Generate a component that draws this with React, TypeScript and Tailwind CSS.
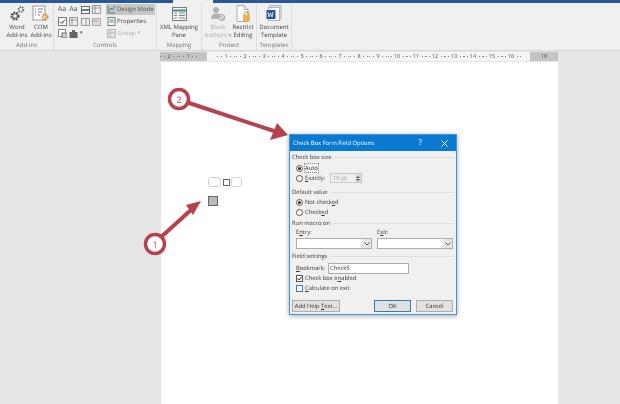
import React from "react";

const font = { fontFamily: '"Open Sans", "Liberation Sans", sans-serif' };

function RibbonGroup({ w, label, children }: { w: string; label: string; children: React.ReactNode }) {
  return (
    <div className={`relative h-full shrink-0 border-r border-[#dcdcdc] ${w}`}>
      {children}
      <div className="absolute bottom-0 left-0 right-0 text-center text-[6px] leading-[9px] text-[#777]">{label}</div>
    </div>
  );
}

function BigButton({ w, icon, lines, muted }: { w: string; icon: React.ReactNode; lines: string[]; muted?: boolean }) {
  return (
    <div className={`flex shrink-0 flex-col items-center ${w}`}>
      <div className="flex h-[17px] w-full items-center justify-center">{icon}</div>
      <div className={`mt-[1px] text-center text-[6px] leading-[8px] ${muted ? "text-[#aaa]" : "text-[#444]"}`}>
        {lines.map((l) => (
          <div key={l} className="whitespace-nowrap">{l}</div>
        ))}
      </div>
    </div>
  );
}

function Gears() {
  return (
    <svg width="16" height="17" viewBox="0 0 16 17">
      <circle cx="6" cy="11" r="3.4" fill="none" stroke="#555" strokeWidth="2.4" strokeDasharray="1.8 1" />
      <circle cx="6" cy="11" r="2.4" fill="none" stroke="#555" strokeWidth="1" />
      <circle cx="12" cy="4.5" r="2.4" fill="none" stroke="#666" strokeWidth="1.8" strokeDasharray="1.4 .8" />
    </svg>
  );
}
function ComIcon() {
  return (
    <svg width="18" height="17" viewBox="0 0 18 17">
      <rect x="1" y="1" width="12" height="14" fill="#fff" stroke="#999" />
      <path d="M3 4h1M3 7h1M3 10h1M6 4h5M6 7h4M6 10h2" stroke="#777" />
      <circle cx="13" cy="12" r="2.6" fill="none" stroke="#e08a2c" strokeWidth="2" strokeDasharray="1.6 .8" />
    </svg>
  );
}
function MapIcon() {
  return (
    <svg width="15" height="14" viewBox="0 0 15 14">
      <rect x=".5" y=".5" width="14" height="13" fill="#f6f6f6" stroke="#7a7a7a" />
      <path d="M.5 3.5h14" stroke="#4d8a8a" strokeWidth="2" />
      <path d="M2 6h3M2 8.5h3M2 11h3M7 6h6M7 8.5h6M7 11h6" stroke="#6f8f8f" />
    </svg>
  );
}
function BlockIcon() {
  return (
    <svg width="16" height="16" viewBox="0 0 16 16">
      <circle cx="6" cy="4" r="3" fill="#b4b4b4" />
      <path d="M1 13c0-4 2-5.5 5-5.5 2 0 3 .5 3.5 1L8 13z" fill="#b4b4b4" />
      <circle cx="11.5" cy="11.5" r="3" fill="#eee" stroke="#aaa" strokeWidth="1.2" />
      <path d="M9.5 9.5l4 4" stroke="#aaa" strokeWidth="1.2" />
    </svg>
  );
}
function RestrictIcon() {
  return (
    <svg width="16" height="17" viewBox="0 0 16 17">
      <path d="M2 .5h7l4 4v12H2z" fill="#fff" stroke="#aaa" />
      <path d="M9 .5v4h4" fill="none" stroke="#aaa" />
      <rect x="8" y="10" width="7" height="6" fill="#eab54e" />
      <path d="M9.7 10V8.5a1.8 1.8 0 013.6 0V10" fill="none" stroke="#b58a36" />
    </svg>
  );
}
function TemplateIcon() {
  return (
    <svg width="16" height="17" viewBox="0 0 16 17">
      <rect x="4" y=".5" width="11" height="13" fill="#dbe4f2" stroke="#a9b6cc" />
      <rect x="2.5" y="2.5" width="11" height="13" fill="#fff" stroke="#a9b6cc" />
      <rect x=".5" y="5" width="9" height="9" fill="#2a5699" />
      <path d="M2 7l1 5 1.5-4 1.5 4 1-5" fill="none" stroke="#fff" strokeWidth=".8" />
    </svg>
  );
}

function Tiny({ children }: { children?: React.ReactNode }) {
  return <div className="flex h-[9px] w-[10px] items-center justify-center text-[7px] leading-[8px] text-[#555]">{children}</div>;
}

function Ribbon() {
  return (
    <div className="flex h-[48px] border-b border-[#d8d8d8] bg-[#f0f0f0]" style={font}>
      <RibbonGroup w="w-[54px]" label="Add-ins">
        <div className="flex pl-[4px] pt-[2px]">
          <BigButton w="w-[26px]" icon={<Gears />} lines={["Word", "Add-ins"]} />
          <BigButton w="w-[22px]" icon={<ComIcon />} lines={["COM", "Add-ins"]} />
        </div>
      </RibbonGroup>
      <RibbonGroup w="w-[103px]" label="Controls">
        <div className="flex gap-[2px] pl-[3px] pt-[1px]">
          <div className="flex w-[47px] flex-col gap-[3px] pt-[1px]">
            <div className="flex gap-[1.5px]">
              <Tiny>Aa</Tiny>
              <Tiny>Aa</Tiny>
              <Tiny><svg width="9" height="8"><rect x=".5" y=".5" width="8" height="7" fill="#fff" stroke="#666" /><rect x="1" y="3" width="7" height="2" fill="#4d8a9a" /></svg></Tiny>
              <Tiny><svg width="9" height="9"><rect x=".5" y=".5" width="8" height="8" fill="#eee" stroke="#999" /><path d="M3 0v9M0 3h9" stroke="#999" /></svg></Tiny>
            </div>
            <div className="flex gap-[1.5px]">
              <Tiny><svg width="9" height="9"><rect x=".5" y=".5" width="8" height="8" fill="#fff" stroke="#777" /><path d="M2 4.5l2 2 3-4" fill="none" stroke="#444" /></svg></Tiny>
              <Tiny><svg width="9" height="9"><rect x=".5" y=".5" width="8" height="8" fill="#eee" stroke="#999" /><path d="M3 0v9M0 3h9" stroke="#999" /></svg></Tiny>
              <Tiny><svg width="9" height="8"><rect x=".5" y=".5" width="8" height="7" fill="#eee" stroke="#999" /><path d="M5 0v8" stroke="#999" /></svg></Tiny>
              <Tiny><svg width="9" height="8"><rect x=".5" y=".5" width="8" height="7" fill="#ddd" stroke="#aaa" /><path d="M0 3h6" stroke="#999" /></svg></Tiny>
            </div>
            <div className="flex gap-[1.5px]">
              <Tiny><svg width="9" height="9"><rect x=".5" y=".5" width="7" height="7" fill="#fff" stroke="#888" /><rect x="4" y="4" width="5" height="5" fill="#ccc" stroke="#777" /></svg></Tiny>
              <Tiny><svg width="9" height="8"><rect x=".5" y="2" width="8" height="6" fill="#666" /><rect x="3" y="0" width="3" height="2" fill="#666" /></svg></Tiny>
              <div className="text-[5px] leading-[9px] text-[#555]">▾</div>
            </div>
          </div>
          <div className="flex flex-col text-[6px]">
            <div className="flex h-[11px] w-[49px] items-center bg-[#c6c6c6] pl-[1px] text-[#555]">
              <svg className="shrink-0" width="9" height="9"><path d="M1 1v7h7" fill="none" stroke="#777" /><path d="M2 6l2-3 1.5 2L8 1" fill="none" stroke="#3d7fa8" /></svg>
              <span className="whitespace-nowrap pl-[1px]">Design Mode</span>
            </div>
            <div className="mt-[1px] flex h-[11px] items-center pl-[1px] text-[#444]">
              <svg className="shrink-0" width="9" height="9"><rect x="1" y=".5" width="7" height="8" fill="#fff" stroke="#777" /><path d="M2.5 3h4M2.5 5h4" stroke="#3d7fa8" /></svg>
              <span className="pl-[1px]">Properties</span>
            </div>
            <div className="mt-[1px] flex h-[11px] items-center gap-[2px] pl-[1px] text-[#aaa]">
              <svg className="shrink-0" width="9" height="9"><rect x=".5" y=".5" width="8" height="8" fill="#e2e2e2" stroke="#bbb" /><path d="M3 .5v8M.5 4h8" stroke="#bbb" /></svg>
              <span>Group</span>
              <span className="text-[5px]">▾</span>
            </div>
          </div>
        </div>
      </RibbonGroup>
      <RibbonGroup w="w-[45px]" label="Mapping">
        <div className="pt-[2px]"><BigButton w="w-full" icon={<MapIcon />} lines={["XML Mapping", "Pane"]} /></div>
      </RibbonGroup>
      <RibbonGroup w="w-[55px]" label="Protect">
        <div className="flex pl-[3px] pt-[2px]">
          <BigButton w="w-[26px]" icon={<BlockIcon />} lines={["Block", "Authors ▾"]} muted />
          <BigButton w="w-[24px]" icon={<RestrictIcon />} lines={["Restrict", "Editing"]} />
        </div>
      </RibbonGroup>
      <RibbonGroup w="w-[35px]" label="Templates">
        <div className="pt-[2px]"><BigButton w="w-full" icon={<TemplateIcon />} lines={["Document", "Template"]} /></div>
      </RibbonGroup>
    </div>
  );
}

function Cell({ n }: { n: number }) {
  return (
    <div className="flex h-full w-[19px] shrink-0 items-center justify-center gap-[2.5px] text-[5.5px] leading-none text-[#555]">
      <span className="h-[1px] w-[1px] bg-[#888]" />
      <span className="h-[1px] w-[1px] bg-[#888]" />
      <span>{n}</span>
      <span className="h-[1px] w-[1px] bg-[#888]" />
      <span className="h-[1px] w-[1px] bg-[#888]" />
    </div>
  );
}

function Ruler() {
  return (
    <div className="ml-[160px] flex h-[9px] w-[398px]" style={font}>
      <div className="flex h-full w-[47px] shrink-0 items-center justify-end overflow-hidden bg-[#c4c4c4] pr-[9.5px]">
        {[2, 1].map((n) => <Cell key={n} n={n} />)}
      </div>
      <div className="flex h-full w-[323px] shrink-0 bg-[#f4f4f4] pl-[9.5px]">
        {Array.from({ length: 16 }, (_, i) => i + 1).map((n) => <Cell key={n} n={n} />)}
      </div>
      <div className="flex h-full flex-1 items-center justify-center bg-[#c4c4c4] text-[5.5px] leading-none text-[#555]">18</div>
    </div>
  );
}

function Section({ title, className = "", children }: { title: string; className?: string; children?: React.ReactNode }) {
  return (
    <div className={className}>
      <div className="flex h-[9px] items-center gap-[3px] text-[5.8px] leading-[9px] text-[#333]">
        <span className="whitespace-nowrap">{title}</span>
        <span className="h-[1px] flex-1 bg-[#dcdcdc]" />
      </div>
      {children}
    </div>
  );
}

function Radio({ on, label, dotted, className = "" }: { on?: boolean; label: React.ReactNode; dotted?: boolean; className?: string }) {
  return (
    <div className={`flex h-[10px] items-center gap-[2px] pl-[4px] text-[5.8px] text-[#333] ${className}`}>
      <span className="flex h-[7px] w-[7px] shrink-0 items-center justify-center rounded-full border border-[#555] bg-white">
        {on && <span className="h-[3px] w-[3px] rounded-full bg-[#222]" />}
      </span>
      <span className={dotted ? "outline-1 outline-dotted outline-[#888]" : ""}>{label}</span>
    </div>
  );
}

function Select() {
  return (
    <div className="mt-[1px] flex h-[11px] w-[76px] items-center justify-end border border-[#adadad] bg-white">
      <div className="flex h-full w-[9px] items-center justify-center bg-[#e6e6e6]">
        <svg width="6" height="4"><path d="M.5.5L3 3 5.500.5" fill="none" stroke="#555" /></svg>
      </div>
    </div>
  );
}

function Btn({ children, primary, w }: { children: React.ReactNode; primary?: boolean; w: string }) {
  return (
    <div className={`flex h-[12px] items-center justify-center whitespace-pre border bg-[#e1e1e1] text-[5.8px] text-[#333] ${w} ${primary ? "border-[#2d7cba]" : "border-[#adadad]"}`}>
      {children}
    </div>
  );
}

function Dialog() {
  return (
    <div className="absolute left-[289px] top-[134px] flex h-[181px] w-[168px] flex-col border border-[#3f93d4] bg-[#f0f0f0] shadow-[0_1px_5px_rgba(0,0,0,0.35)]" style={font}>
      <div className="flex h-[16px] shrink-0 items-center bg-[#0a79d1] pl-[3px] pr-[8px] text-[5.8px] text-white">
        <span className="flex-1 whitespace-nowrap">Check Box Form Field Options</span>
        <span className="mr-[19px] text-[8px]">?</span>
        <svg width="7" height="7"><path d="M.5.5l6 6M6.5.5l-6 6" stroke="#fff" /></svg>
      </div>
      <div className="flex flex-1 flex-col px-[2px] pt-[2px]">
        <Section title="Check box size">
          <Radio on dotted label="Auto" className="mt-[1px]" />
          <div className="flex items-center">
            <Radio label={<><u>E</u>xactly:</>} className="w-[38px]" />
            <div className="flex h-[10px] w-[32px] items-center justify-between border border-[#c8c8c8] bg-[#f0f0f0] pl-[2px] text-[5.8px] text-[#999]">
              <span>10 pt</span>
              <span className="flex h-full w-[6px] flex-col items-center justify-center gap-[1px] bg-[#ddd]">
                <svg width="4" height="2"><path d="M0 2L2 0l2 2z" fill="#555" /></svg>
                <svg width="4" height="2"><path d="M0 0l2 2 2-2z" fill="#555" /></svg>
              </span>
            </div>
          </div>
        </Section>
        <Section title="Default value" className="mt-[5px]">
          <Radio on label={<>Not check<u>e</u>d</>} />
          <Radio label={<>Check<u>e</u>d</>} />
        </Section>
        <Section title="Run macro on" className="mt-[2px]">
          <div className="flex gap-[5px] pl-[4px]">
            <div>
              <div className="text-[5.8px] leading-[9px] text-[#333]">E<u>n</u>try:</div>
              <Select />
            </div>
            <div>
              <div className="text-[5.8px] leading-[9px] text-[#333]">E<u>x</u>it:</div>
              <Select />
            </div>
          </div>
        </Section>
        <Section title="Field settings" className="mt-[3px]">
          <div className="mt-[2px] flex h-[11px] items-center pl-[4px] text-[5.8px] text-[#333]">
            <span className="w-[32px]"><u>B</u>ookmark:</span>
            <div className="flex h-full w-[81px] items-center border border-[#adadad] bg-white pl-[1px]">Check5</div>
          </div>
          <div className="flex h-[9px] items-center gap-[2px] pl-[4px] text-[5.8px] text-[#333]">
            <svg width="7" height="7"><rect x=".5" y=".5" width="6" height="6" fill="#fff" stroke="#555" /><path d="M1.5 3.5L3 5l2.5-3" fill="none" stroke="#333" /></svg>
            <span>Check box e<u>n</u>abled</span>
          </div>
          <div className="mt-[1px] flex h-[9px] items-center gap-[2px] pl-[4px] text-[5.8px] text-[#333]">
            <svg width="7" height="7"><rect x=".5" y=".5" width="6" height="6" fill="#fff" stroke="#3a7fb5" /></svg>
            <span><u>C</u>alculate on exit</span>
          </div>
        </Section>
        <div className="mt-[7px] flex items-center">
          <Btn w="w-[48px]"><span>Add Help <u>T</u>ext...</span></Btn>
          <div className="ml-[34px]"><Btn primary w="w-[37px]">OK</Btn></div>
          <div className="ml-[5px]"><Btn w="w-[37px]">Cancel</Btn></div>
        </div>
      </div>
    </div>
  );
}

function Arrows() {
  return (
    <svg className="absolute left-0 top-0" width="620" height="404" viewBox="0 0 620 404">
      <g fill="none" stroke="#b4424f">
        <path d="M186 102L277 132" strokeWidth="4" />
        <path d="M160 238L192 209" strokeWidth="4" />
        <circle cx="179" cy="99" r="9.5" fill="#fff" strokeWidth="3.5" />
        <circle cx="155" cy="244" r="9.5" fill="#fff" strokeWidth="3.5" />
      </g>
      <path d="M288 135L270 140L277 123Z" fill="#b4424f" />
      <path d="M201 201L193 215L186 205Z" fill="#b4424f" />
      <text x="179" y="102.5" textAnchor="middle" fontSize="9" fill="#b4424f" fontFamily="Open Sans">2</text>
      <text x="155" y="247.5" textAnchor="middle" fontSize="9" fill="#b4424f" fontFamily="Open Sans">1</text>
    </svg>
  );
}

function FormControls() {
  return (
    <>
      <div className="absolute left-[208px] top-[177px] flex h-[10px] w-[34px] items-center justify-between">
        <div className="h-[10px] w-[13px] rounded-[3px] border border-[#cfcfcf] bg-white" />
        <div className="h-[7px] w-[7px] border border-[#666] bg-white" />
        <div className="h-[10px] w-[11px] rounded-[3px] border border-[#cfcfcf] bg-white" />
      </div>
      <div className="absolute left-[208px] top-[196px] h-[10px] w-[10px] border border-[#666] bg-[#b8b8b8]" />
    </>
  );
}

export default function App() {
  return (
    <div className="relative h-[404px] w-[620px] overflow-hidden bg-[#e6e6e6] blur-[0.35px] [text-rendering:geometricPrecision]">
      <div className="flex h-[3px]">
        <div className="w-[173px] bg-[#2b579a]" />
        <div className="w-[40px] bg-[#f0f0f0]" />
        <div className="flex-1 bg-[#2b579a]" />
      </div>
      <Ribbon />
      <div className="h-[1px]" />
      <Ruler />
      <div className="ml-[161px] mt-[1px] h-[400px] w-[397px] bg-white" />
      <FormControls />
      <Arrows />
      <Dialog />
    </div>
  );
}
